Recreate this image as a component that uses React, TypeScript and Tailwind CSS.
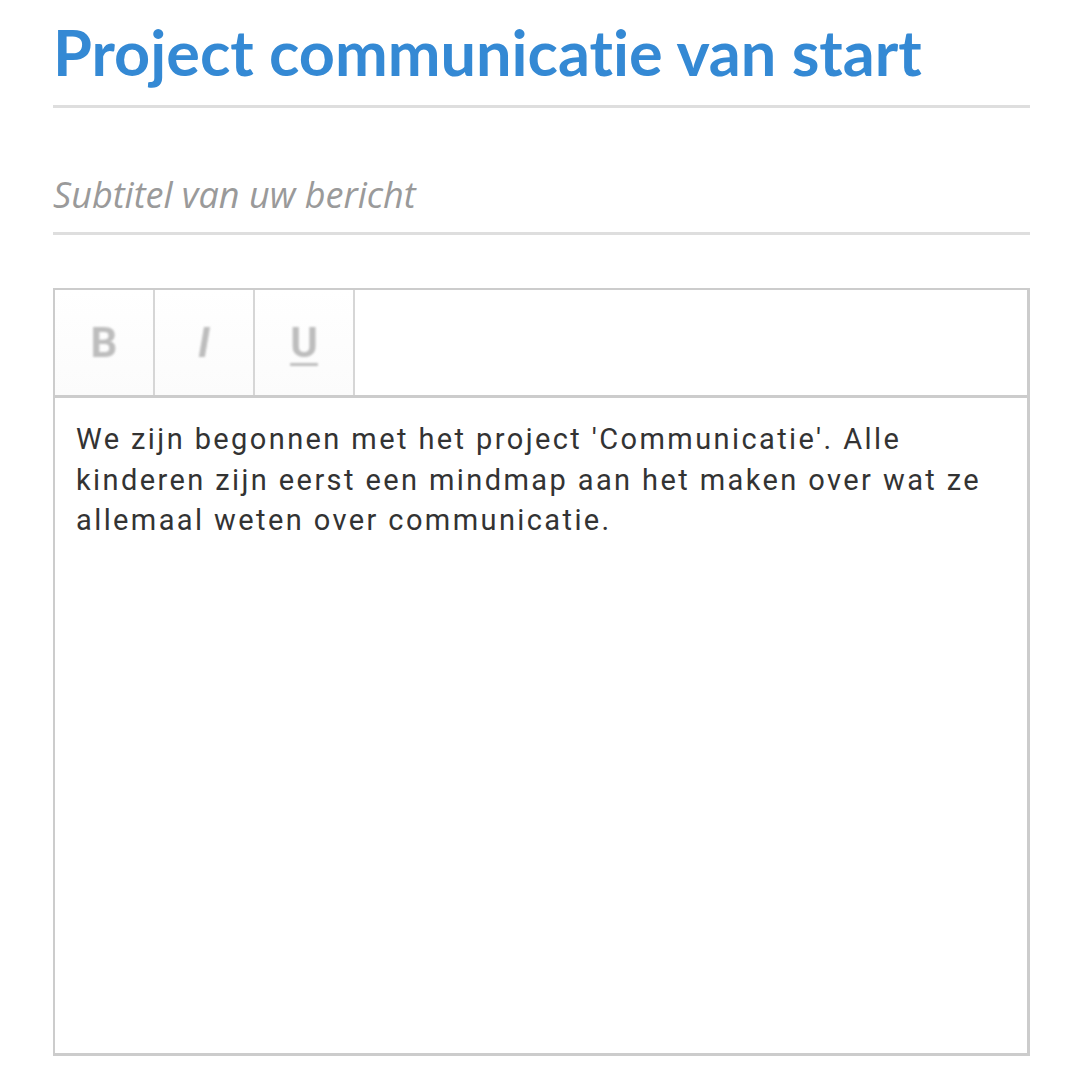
import React from 'react';

const toolButtons = [
  { key: 'bold', label: 'B', className: 'font-bold' },
  { key: 'italic', label: 'I', className: 'font-bold italic' },
  { key: 'underline', label: 'U', className: 'font-bold underline decoration-[3px] underline-offset-[6px]' },
];

export default function App() {
  return (
    <div className="min-h-screen bg-white pl-[53px] pr-[50px]">
      <h1
        className="border-b-[3px] border-[#dedede] pt-[13px] pb-[14px] text-[63px] leading-[78px] font-bold text-[#3489d4] [font-variant-ligatures:none]"
        style={{ fontFamily: 'Lato, "Open Sans", sans-serif' }}
      >
        Project communicatie van start
      </h1>

      <div
        className="mt-[63px] border-b-[3px] border-[#dedede] pb-[13px] text-[36px] leading-[48px] italic text-[#9a9a9a]"
        style={{ fontFamily: '"Open Sans", sans-serif' }}
      >
        Subtitel van uw bericht
      </div>

      <div className="mt-[53px] flex h-[768px] flex-col border-t-2 border-l-2 border-r-[3px] border-b-[3px] border-[#cccccc]">
        <div className="flex h-[108px] border-b-[3px] border-[#cccccc]">
          {toolButtons.map((b) => (
            <div
              key={b.key}
              className="flex w-[100px] items-center justify-center border-r-2 border-[#d6d6d6] bg-gradient-to-b from-white to-[#fbfbfb]"
            >
              <span
                className={`text-[42px] text-[#bdbdbd] blur-[0.8px] ${b.className}`}
                style={{ fontFamily: 'Roboto, sans-serif' }}
              >
                {b.label}
              </span>
            </div>
          ))}
        </div>
        <div
          className="pl-[21px] pr-[36px] pt-[21px] text-[29px] leading-[40.5px] tracking-[2.4px] text-[#333333]"
          style={{ fontFamily: 'Roboto, sans-serif' }}
        >
          We zijn begonnen met het project 'Communicatie'. Alle kinderen zijn eerst een mindmap aan het maken over wat ze allemaal weten over communicatie.
        </div>
      </div>
    </div>
  );
}
